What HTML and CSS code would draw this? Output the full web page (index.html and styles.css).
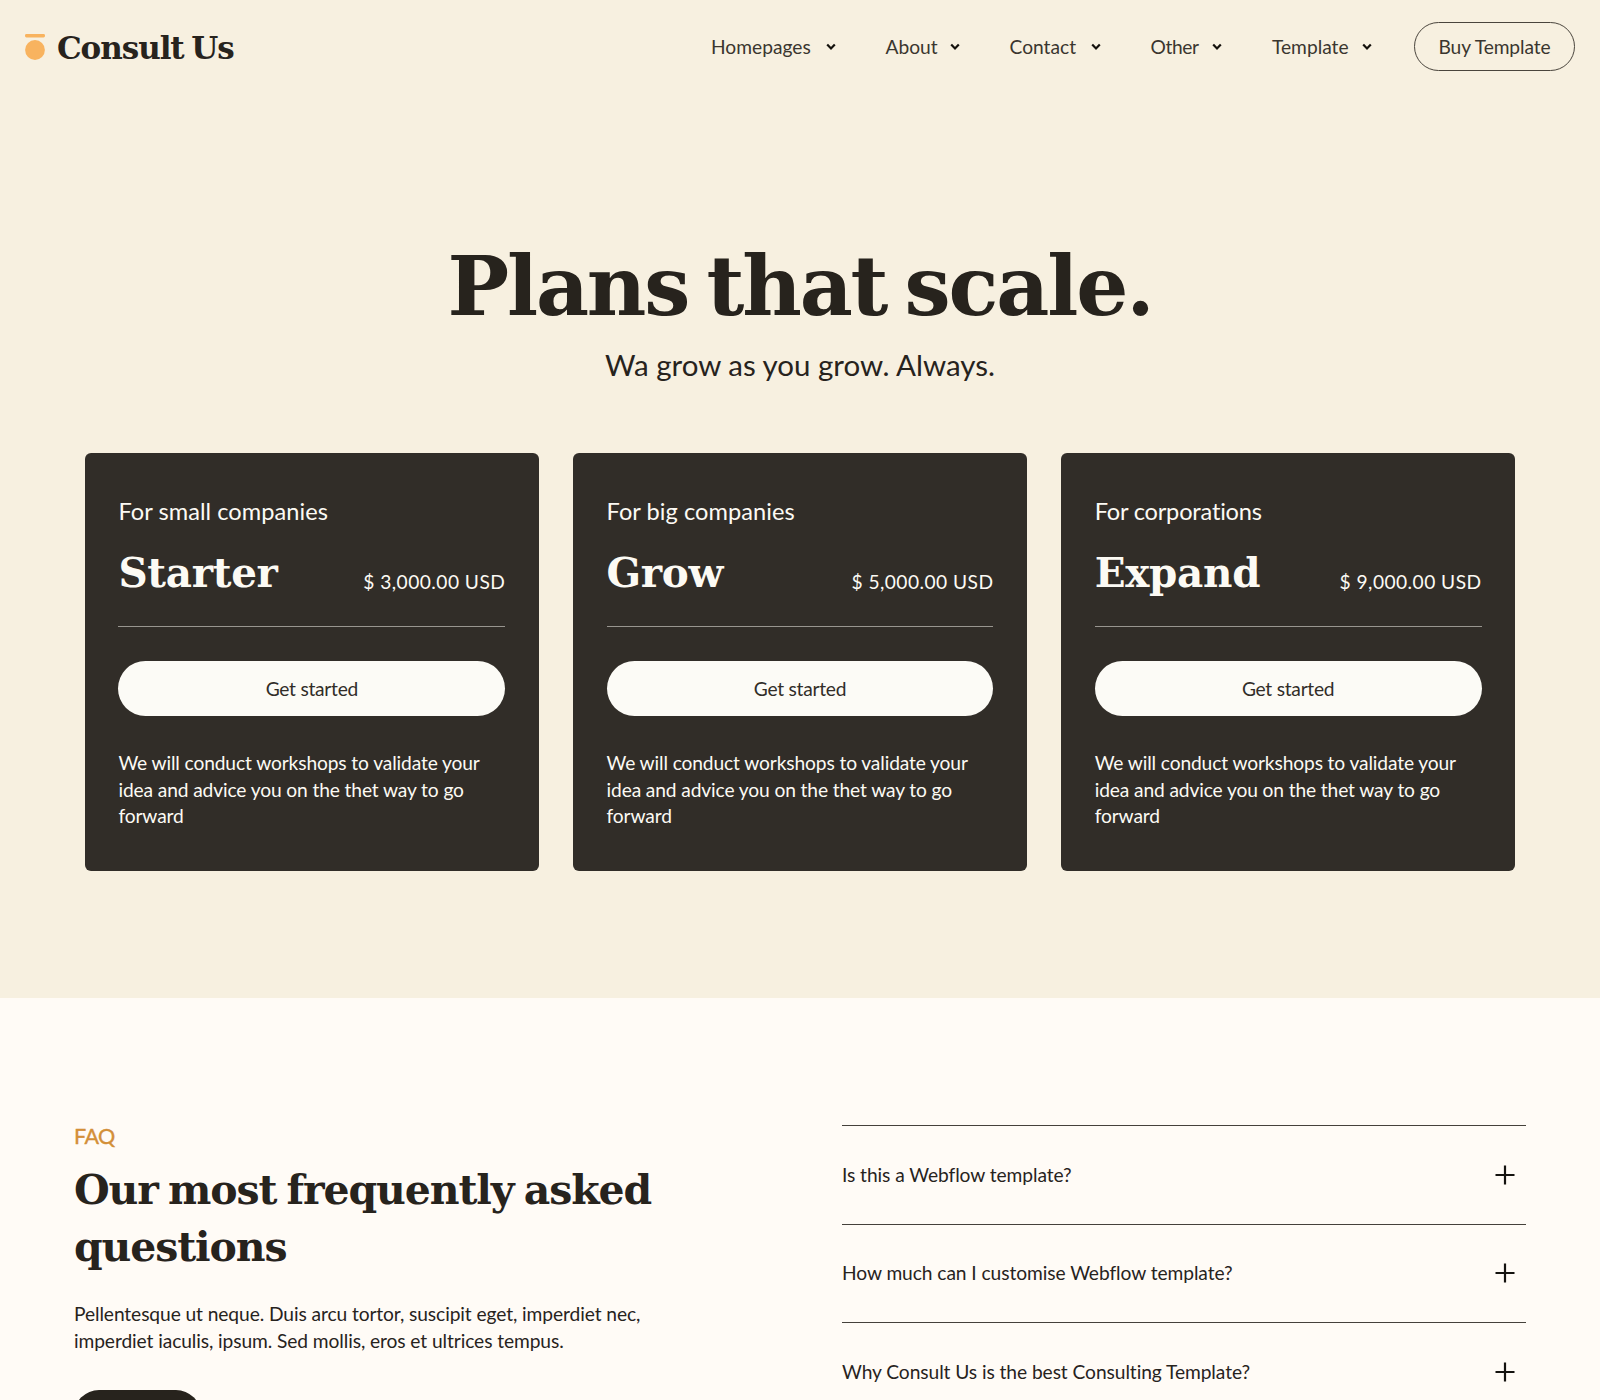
FILE: index.html
```html
<!DOCTYPE html>
<html lang="en">
<head>
<meta charset="utf-8">
<title>Consult Us – Pricing</title>
<link rel="stylesheet" href="styles.css">
</head>
<body>
<svg class="sprite" aria-hidden="true">
  <symbol id="chevron" viewBox="0 0 10 8"><path d="M1.2 1.5 5 5.5 8.8 1.5" fill="none" stroke="#14110c" stroke-width="2.2"/></symbol>
  <symbol id="plus" viewBox="0 0 20 20"><path d="M10 .5v19M.5 10h19" fill="none" stroke="#14120f" stroke-width="2.2"/></symbol>
</svg>
<section class="hero">
  <header class="header">
    <a class="brand">
      <svg class="brand-mark" viewBox="0 0 20 26"><rect width="20" height="3.4" rx="1.4" fill="#f8b35f"/><circle cx="10" cy="16" r="9.9" fill="#f8b35f"/></svg>
      <span class="brand-name">Consult Us</span>
    </a>
    <nav class="nav">
      <a class="nav-item"><span>Homepages</span><svg class="chevron"><use href="#chevron"/></svg></a>
      <a class="nav-item"><span>About</span><svg class="chevron"><use href="#chevron"/></svg></a>
      <a class="nav-item"><span>Contact</span><svg class="chevron"><use href="#chevron"/></svg></a>
      <a class="nav-item other"><span>Other</span><svg class="chevron"><use href="#chevron"/></svg></a>
      <a class="nav-item last"><span>Template</span><svg class="chevron"><use href="#chevron"/></svg></a>
      <a class="buy">Buy Template</a>
    </nav>
  </header>
  <h1 class="title">Plans that scale.</h1>
  <p class="subtitle">Wa grow as you grow. Always.</p>
  <div class="plans">
    <article class="plan">
      <p class="plan-for">For small companies</p>
      <div class="plan-row"><h2 class="plan-name">Starter</h2><span class="price">$ 3,000.00 USD</span></div>
      <a class="start">Get started</a>
      <p class="plan-text">We will conduct workshops to validate your idea and advice you on the thet way to go forward</p>
    </article>
    <article class="plan">
      <p class="plan-for">For big companies</p>
      <div class="plan-row"><h2 class="plan-name">Grow</h2><span class="price">$ 5,000.00 USD</span></div>
      <a class="start">Get started</a>
      <p class="plan-text">We will conduct workshops to validate your idea and advice you on the thet way to go forward</p>
    </article>
    <article class="plan">
      <p class="plan-for tight">For corporations</p>
      <div class="plan-row"><h2 class="plan-name">Expand</h2><span class="price">$ 9,000.00 USD</span></div>
      <a class="start">Get started</a>
      <p class="plan-text">We will conduct workshops to validate your idea and advice you on the thet way to go forward</p>
    </article>
  </div>
</section>
<section class="faq">
  <div class="faq-intro">
    <p class="eyebrow">FAQ</p>
    <h2 class="faq-title">Our most frequently asked questions</h2>
    <p class="faq-text">Pellentesque ut neque. Duis arcu tortor, suscipit eget, imperdiet nec, imperdiet iaculis, ipsum. Sed mollis, eros et ultrices tempus.</p>
    <a class="faq-button"></a>
  </div>
  <div class="faq-list">
    <div class="question"><span>Is this a Webflow template?</span><svg class="plus"><use href="#plus"/></svg></div>
    <div class="question"><span>How much can I customise Webflow template?</span><svg class="plus"><use href="#plus"/></svg></div>
    <div class="question"><span>Why Consult Us is the best Consulting Template?</span><svg class="plus"><use href="#plus"/></svg></div>
  </div>
</section>
</body>
</html>
```
FILE: styles.css
```css
* { box-sizing: border-box; margin: 0; padding: 0; }
body {
  height: 1400px;
  overflow: hidden;
  background: #fffbf6;
  color: #27231d;
  font: 19.2px/26.8px Lato, "Liberation Sans", sans-serif;
}
.sprite { display: none; }

.hero { height: 997.5px; background: #f7f0e0; }
.header {
  height: 92px;
  padding: 0 25px;
  display: flex;
  align-items: center;
  justify-content: space-between;
}
.brand { display: flex; align-items: center; gap: 12px; }
.brand-mark { width: 20px; height: 26px; margin-top: 1px; }
.brand-name {
  font: bold 31px/40px "DejaVu Serif", serif;
  letter-spacing: -1.05px;
  word-spacing: -2px;
  margin-top: 4px;
}
.nav {
  display: grid;
  grid-template-columns: 174.5px 124px 141px 121.5px 142px 161px;
  align-items: center;
  color: #3a362f;
}
.nav-item {
  display: flex;
  align-items: center;
  justify-content: space-between;
  padding-right: 50px;
}
.nav-item span { padding-top: 2px; }
.nav-item.other { letter-spacing: -.4px; }
.nav-item.last { padding-right: 42px; }
.chevron { width: 10px; height: 8px; margin-top: 2px; }
.buy {
  height: 49px;
  padding-top: 2px;
  border: 1.3px solid #4a453d;
  border-radius: 25px;
  display: grid;
  place-items: center;
  letter-spacing: -.1px;
}

.title {
  padding-top: 144px;
  text-align: center;
  font: bold 82px/100px "DejaVu Serif", serif;
  letter-spacing: -2.2px;
  word-spacing: -8px;
}
.subtitle {
  margin-top: 9px;
  text-align: center;
  font-size: 29.5px;
  line-height: 40px;
}
.plans {
  margin-top: 68px;
  padding: 0 84.6px;
  display: grid;
  grid-template-columns: repeat(3, 1fr);
  gap: 33.6px;
}
.plan {
  padding: 42.4px 33.8px 41.2px;
  border-radius: 6px;
  background: #312d28;
  color: #fcfaf4;
}
.plan-for { font-size: 23.6px; line-height: 32px; letter-spacing: .05px; }
.plan-for.tight { letter-spacing: -.2px; }
.plan-row {
  margin-top: 20.4px;
  padding-bottom: 28.2px;
  border-bottom: 1px solid #98958f;
  display: flex;
  justify-content: space-between;
  align-items: flex-end;
}
.plan-name {
  font: bold 40.5px/50px "DejaVu Serif", serif;
  letter-spacing: -.3px;
}
.price { margin-bottom: 3px; line-height: 27px; letter-spacing: .45px; }
.start {
  margin-top: 34px;
  height: 55px;
  padding-top: 1px;
  border-radius: 28px;
  display: grid;
  place-items: center;
  background: #fcfbf6;
  color: #312d28;
  letter-spacing: -.25px;
}
.plan-text { margin-top: 33.9px; letter-spacing: -.12px; }

.faq {
  padding: 125.2px 74px 0;
  display: flex;
  justify-content: space-between;
}
.faq-intro { width: 600px; }
.eyebrow {
  color: #d38f38;
  -webkit-text-stroke: .4px #d38f38;
  font-size: 21.5px;
  line-height: 26px;
  letter-spacing: -.5px;
}
.faq-title {
  margin-top: 13.5px;
  font: bold 41px/57px "DejaVu Serif", serif;
  letter-spacing: -1.1px;
  word-spacing: -3px;
}
.faq-text { margin-top: 24px; line-height: 27px; letter-spacing: -.09px; }
.faq-button {
  display: block;
  margin-top: 35.6px;
  width: 127px;
  height: 55px;
  border-radius: 25px;
  background: #27231d;
}
.faq-list { width: 684px; margin-top: 2.6px; }
.question {
  height: 98.3px;
  padding-right: 11px;
  border-top: 1.4px solid #45413b;
  display: flex;
  align-items: center;
  justify-content: space-between;
  letter-spacing: -.07px;
}
.question span { padding-top: 1px; }
.plus { width: 20px; height: 20px; }
```
